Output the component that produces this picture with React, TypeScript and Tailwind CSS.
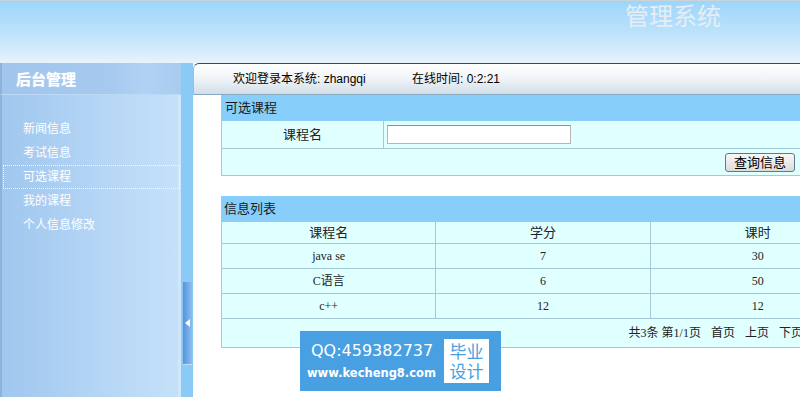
import React from "react";

const cell = "flex items-center justify-center border-[#a3c9d9]";

export default function App() {
  const rows = [
    ["java se", "7", "30"],
    ["C语言", "6", "50"],
    ["c++", "12", "12"],
  ];
  return (
    <div className="relative w-[800px] h-[397px] overflow-hidden bg-white font-['Liberation_Sans','Noto_Sans_CJK_SC',sans-serif] text-[12px] text-black">
      {/* header */}
      <div className="h-[63px] border-t border-[#c9d3da] bg-[linear-gradient(to_bottom,#9dd5fa,#bfe3fb_55%,#e7f3fc)]">
        <div className="pl-[625px] pt-[2px] text-[24px] leading-[28px] text-[#e6eef5] font-['Liberation_Serif','Noto_Sans_CJK_SC',serif]">
          管理系统
        </div>
      </div>

      <div className="flex h-[334px]">
        {/* sidebar */}
        <div className="w-[181px] flex flex-col">
          <div className="h-[32px] flex items-center pl-[14px] pt-[3px] border-l-2 border-[#8db2dc] border-b border-b-[#bcd9f5] bg-[linear-gradient(to_right,#a2c5ee,#a6c9ef_60%,#b2d2f3_80%,#a8cbf0)] text-white font-bold text-[15px] [text-shadow:0_0_1px_#dbe9f8]">
            后台管理
          </div>
          <div className="flex-1 border-l-2 border-[#8db2dc] border-r-[3px] border-r-[#cfe6fb] bg-[linear-gradient(to_right,#a0c7ef,#c5e1f9)] pt-[22px]">
            {["新闻信息", "考试信息", "可选课程", "我的课程", "个人信息修改"].map((t) => (
              <div
                key={t}
                className={
                  "h-[24px] ml-[1px] w-[177px] pl-[20px] flex items-center text-white text-[12px] " +
                  (t === "可选课程" ? "outline outline-1 outline-dotted outline-[#f4f8fc] -outline-offset-1" : "")
                }
              >
                {t}
              </div>
            ))}
          </div>
        </div>

        {/* splitter */}
        <div className="w-[12px] bg-[#8bcaf5] flex flex-col">
          <div className="mt-[219px] ml-[2px] w-[9px] h-[83px] bg-[linear-gradient(to_right,#5593dc,#8fbdee)] border-b border-[#c4dcf4] flex items-center justify-center">
            <div className="w-0 h-0 border-y-[4px] border-y-transparent border-r-[5px] border-r-white" />
          </div>
        </div>

        {/* main */}
        <div className="flex-1 min-w-0 overflow-hidden bg-white flex flex-col">
          <div className="h-[32px] shrink-0 flex items-center rounded-tl-[6px] border-t border-[#2f4e63] border-l border-l-[#a9bccb] border-b border-b-[#86a9c2] bg-[linear-gradient(to_bottom,#ffffff,#f1f5f8_45%,#d2dee8)]">
            <span className="pl-[39px] w-[218px] shrink-0">欢迎登录本系统: zhangqi</span>
            <span className="shrink-0">在线时间: 0:2:21</span>
          </div>

          <div className="pl-[28px] flex flex-col">
            {/* panel 1 */}
            <div className="w-[582px] shrink-0 border-x border-b border-[#a3c9d9]">
              <div className="h-[26px] bg-[#87cefa] flex items-center pl-[3px] text-[13px] text-[#1a1a1a]">可选课程</div>
              <div className="flex h-[28px] bg-[#e0ffff] border-b border-[#a3c9d9]">
                <div className={cell + " w-[162px] border-r text-[13px] text-[#222]"}>课程名</div>
                <div className="flex items-center pl-[3px]">
                  <input className="w-[184px] h-[19px] bg-white border border-[#b5b5b5] border-t-[#8f8f8f] outline-none" />
                </div>
              </div>
              <div className="h-[26px] bg-[#e0ffff] flex items-center justify-end pr-[7px]">
                <button className="w-[70px] h-[19px] rounded-[3px] border border-[#5a7a8e] bg-[linear-gradient(to_bottom,#f8f8f8,#dcdcdc)] text-[13px] leading-[15px] text-black">
                  查询信息
                </button>
              </div>
            </div>

            {/* panel 2 */}
            <div className="mt-[20px] w-[645px] shrink-0 border-x border-b border-[#a3c9d9]">
              <div className="h-[26px] bg-[#87cefa] flex items-center pl-[2px] text-[13px] text-[#1a1a1a]">信息列表</div>
              <div className="grid grid-cols-3 h-[22px] bg-[#e0ffff] border-b border-[#a3c9d9] text-[13px] text-[#222]">
                <div className={cell + " border-r"}>课程名</div>
                <div className={cell + " border-r"}>学分</div>
                <div className={cell}>课时</div>
              </div>
              {rows.map((r) => (
                <div key={r[0]} className="grid grid-cols-3 h-[25px] bg-[#e0ffff] border-b border-[#a3c9d9] text-[12px] text-[#222] font-['Liberation_Serif','Noto_Sans_CJK_SC',serif]">
                  <div className={cell + " border-r"}>{r[0]}</div>
                  <div className={cell + " border-r"}>{r[1]}</div>
                  <div className={cell}>{r[2]}</div>
                </div>
              ))}
              <div className="h-[28px] bg-[#e0ffff] flex items-center justify-end pr-[28px] text-[12px] text-[#222] font-['Liberation_Serif','Noto_Sans_CJK_SC',serif]">
                <span>共3条</span>
                <span className="ml-[3px]">第1/1页</span>
                <span className="ml-[10px]">首页</span>
                <span className="ml-[10px]">上页</span>
                <span className="ml-[10px]">下页</span>
                <span className="ml-[10px]">尾页</span>
              </div>
            </div>
          </div>
        </div>
      </div>

      {/* watermark */}
      <div className="absolute left-[300px] top-[331px] w-[201px] h-[60px] bg-[#48a0e2] flex items-center">
        <div className="flex flex-col pl-[7px] w-[144px] text-white font-['DejaVu_Sans',sans-serif]">
          <div className="text-[16px] leading-[22px] pl-[4px]">QQ:459382737</div>
          <div className="text-[11.5px] leading-[18px] font-bold mt-[2px]">www.kecheng8.com</div>
        </div>
        <div className="w-[45px] h-[44px] bg-white flex flex-col items-center justify-center text-[#48a0e2] text-[17px] leading-[20px] font-['Noto_Sans_CJK_SC',sans-serif]">
          <span>毕业</span>
          <span>设计</span>
        </div>
      </div>
    </div>
  );
}
